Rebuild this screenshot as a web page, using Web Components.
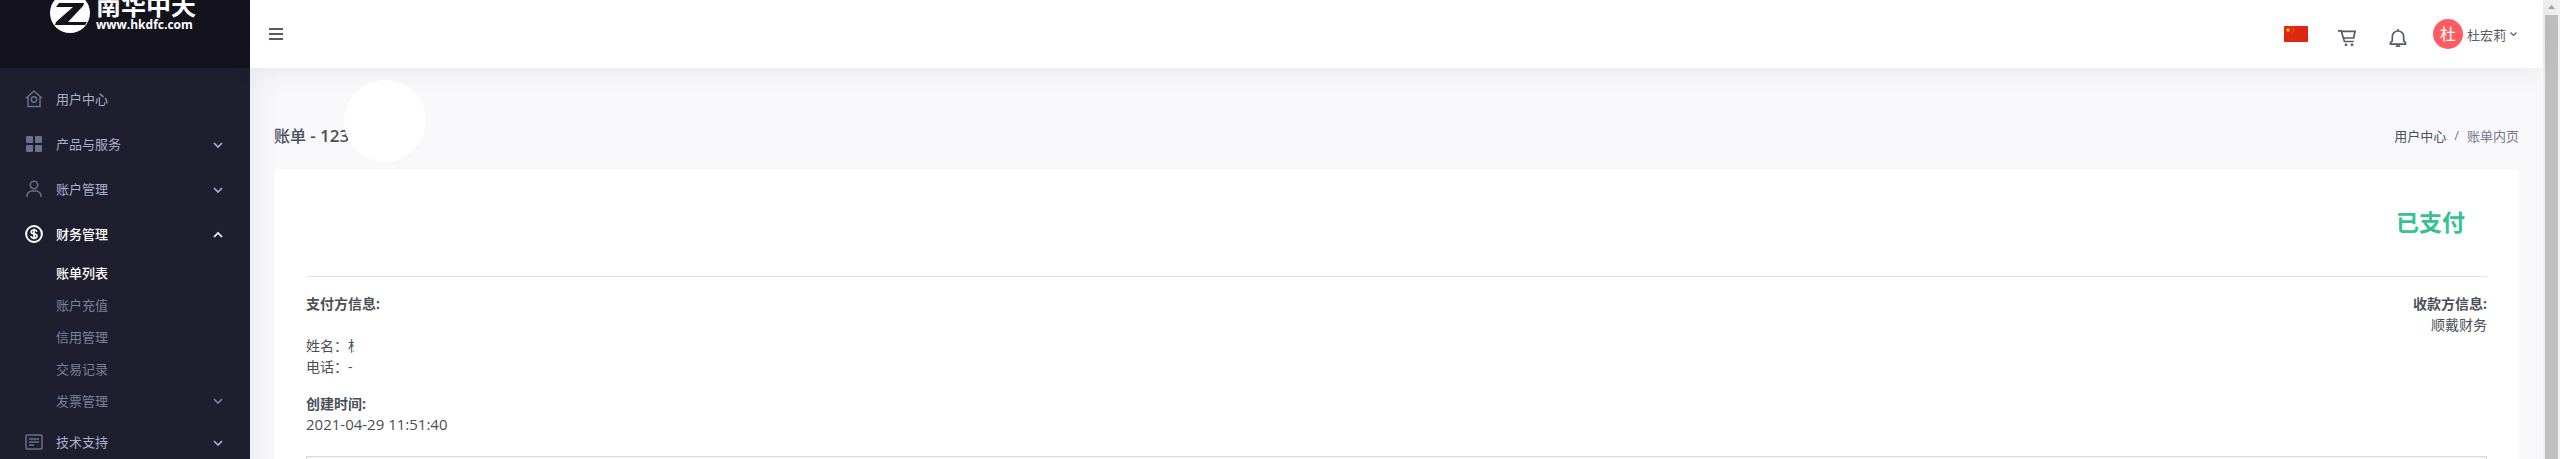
<!DOCTYPE html>
<html lang="zh-CN">
<head>
<meta charset="utf-8">
<title>账单</title>
<style>
body {
    margin: 0;
    height: 100vh;
    overflow: hidden;
    background-color: #f8f8fb;
    color: #495057;
    font-family: "Open Sans", "Noto Sans CJK SC", sans-serif;
    font-size: 13px;
}
</style>
</head>
<body>
<app-shell>
    <side-bar slot="side">
        <brand-logo slot="brand"></brand-logo>
        <nav-item icon="home" label="用户中心"></nav-item>
        <nav-item icon="grid" label="产品与服务" arrow="down"></nav-item>
        <nav-item icon="user" label="账户管理" arrow="down"></nav-item>
        <nav-item icon="money" label="财务管理" arrow="up" active>
            <sub-item label="账单列表" active></sub-item>
            <sub-item label="账户充值"></sub-item>
            <sub-item label="信用管理"></sub-item>
            <sub-item label="交易记录"></sub-item>
            <sub-item label="发票管理" arrow></sub-item>
        </nav-item>
        <nav-item icon="doc" label="技术支持" arrow="down"></nav-item>
    </side-bar>
    <top-bar slot="top" user="杜宏莉" initial="杜"></top-bar>
    <page-title number="123">
        账单
        <a slot="parent" href="#">用户中心</a>
        <span slot="current">账单内页</span>
    </page-title>
    <bill-card>
        <span slot="status">已支付</span>
        <bill-info slot="payer" label="支付方信息:">
            <br>姓名：<name-clip>杜</name-clip><br>电话：-
        </bill-info>
        <bill-info slot="payer" label="创建时间:"><bill-time>2021-04-29 11:51:40</bill-time></bill-info>
        <bill-info slot="payee" label="收款方信息:">顺戴财务</bill-info>
    </bill-card>
    <scroll-track slot="scroll"></scroll-track>
</app-shell>

<script>
const icons = {
    home: '<path d="M1 8.200 9 1l8 7.200M3 7v9.500h12V7"/><circle cx="9" cy="9.500" r="2.700"/>',
    grid: '<g fill="currentColor" stroke="none"><rect x="1" y="1" width="7" height="7" rx="1"/><rect x="10" y="1" width="7" height="7" rx="1"/><rect x="1" y="10" width="7" height="7" rx="1"/><rect x="10" y="10" width="7" height="7" rx="1"/></g>',
    user: '<circle cx="9" cy="5" r="3.700"/><path d="M2 17v-1a5 5 0 0 1 5-5h4a5 5 0 0 1 5 5v1"/>',
    money: '<circle cx="9" cy="9" r="7.900" stroke-width="2"/><path d="M12 6.800C11.600 5.500 10.500 5 9 5 7.300 5 6.200 5.700 6.200 6.900 6.200 9.600 12 8.200 12 11c0 1.300-1.300 2-3 2s-2.800-.6-3.100-1.900M9 3.700v10.600" stroke-width="1.700"/>',
    doc: '<rect x="1" y="2" width="16" height="14" rx="1"/><path d="M4 6h10M4 9h10M4 12h5"/>'
}

function define(name, html, setup) {
    const template = document.createElement('template')
    template.innerHTML = html
    customElements.define(name,
    class extends HTMLElement {
        constructor() {
            super()
            this.attachShadow({ mode: 'open' })
                .appendChild(template.content.cloneNode(true))
            if (setup) setup(this, this.shadowRoot)
        }
    })
}

define('app-shell', `
<style>
:host {
    display: grid;
    grid-template-columns: 250px minmax(0, 1fr) 17px;
    height: 100vh;
    overflow: hidden;
}
.page {
    display: flex;
    flex-direction: column;
    min-width: 0;
}
main {
    flex: 1;
    min-height: 0;
    padding: 0 24px;
}
</style>
<slot name="side"></slot>
<div class="page">
    <slot name="top"></slot>
    <main><slot></slot></main>
</div>
<slot name="scroll"></slot>
`)

define('side-bar', `
<style>
:host {
    display: block;
    overflow: hidden;
    background-color: #1f1e2e;
    box-shadow: 0 0 30px rgba(31, 30, 46, 0.08);
}
.brand {
    display: flex;
    box-sizing: border-box;
    height: 68px;
    padding-left: 50px;
    background-color: #14131d;
}
nav {
    padding-top: 8px;
}
</style>
<div class="brand"><slot name="brand"></slot></div>
<nav><slot></slot></nav>
`)

define('brand-logo', `
<style>
:host {
    display: flex;
    gap: 6px;
    height: 33px;
    align-items: flex-end;
    color: #fff;
}
svg {
    display: block;
}
.name {
    font-size: 25px;
    font-weight: bold;
    line-height: 24px;
}
.site {
    font-size: 12px;
    font-weight: bold;
    line-height: 16px;
}
</style>
<svg width="40" height="40" viewBox="0 0 40 40">
    <circle cx="20" cy="20" r="20" fill="#fff"/>
    <path d="M9 10h25l-1 3L18 29h19l-2 3H5l1-3 17-15H6z" fill="#14131d"/>
</svg>
<div>
    <div class="name">南华中天</div>
    <div class="site">www.hkdfc.com</div>
</div>
`)

define('nav-item', `
<style>
:host {
    display: block;
    color: #a6b0cf;
    --icon: #6a7187;
}
:host([active]) {
    padding-bottom: 3px;
    color: #fff;
    --icon: #fff;
}
:host([active]) .label {
    font-weight: 500;
}
a {
    display: flex;
    align-items: center;
    height: 45px;
    padding: 0 27px 0 25px;
    color: inherit;
    text-decoration: none;
}
.icon {
    width: 18px;
    height: 18px;
    margin-right: 13px;
    color: var(--icon);
}
.label {
    flex: 1;
}
</style>
<a href="#">
    <svg class="icon" viewBox="0 0 18 18" fill="none" stroke="currentColor" stroke-width="1.500"></svg>
    <span class="label"></span>
    <svg class="arrow" width="10" height="10" viewBox="0 0 10 10" fill="none" stroke="currentColor" stroke-width="1.700"><path/></svg>
</a>
<slot></slot>
`, (el, root) => {
    root.querySelector('.icon').innerHTML = icons[el.getAttribute('icon')]
    root.querySelector('.label').textContent = el.getAttribute('label')
    const arrow = el.getAttribute('arrow')
    if (arrow) {
        root.querySelector('.arrow path').setAttribute('d', arrow === 'up' ? 'M1 8l4-4 4 4' : 'M1 4l4 4 4-4')
    }
})

define('sub-item', `
<style>
:host {
    display: block;
    color: #79829c;
}
:host([active]) {
    color: #fff;
    font-weight: 500;
}
a {
    display: flex;
    align-items: center;
    justify-content: space-between;
    height: 32px;
    padding: 0 27px 0 56px;
    color: inherit;
    text-decoration: none;
}
svg {
    display: none;
}
:host([arrow]) svg {
    display: block;
}
</style>
<a href="#">
    <span></span>
    <svg width="10" height="10" viewBox="0 0 10 10" fill="none" stroke="currentColor" stroke-width="1.700"><path d="M1 4l4 4 4-4"/></svg>
</a>
`, (el, root) => {
    root.querySelector('span').textContent = el.getAttribute('label')
})

define('top-bar', `
<style>
:host {
    display: flex;
    position: relative;
    align-items: center;
    justify-content: space-between;
    box-sizing: border-box;
    height: 68px;
    padding: 0 26px 0 19px;
    background-color: #fff;
    color: #555b6d;
    box-shadow: 0 0 30px rgba(31, 30, 46, 0.08);
}
button {
    display: flex;
    align-items: center;
    padding: 0;
    border: none;
    background: none;
    color: inherit;
    font: inherit;
    cursor: pointer;
}
.tools {
    display: flex;
    align-items: center;
}
.flag {
    margin-right: 29px;
}
.cart {
    margin: 8px 32px 0 0;
}
.bell {
    margin: 8px 26px 0 0;
}
.avatar {
    width: 30px;
    height: 30px;
    margin-right: 4px;
    border-radius: 50%;
    background-color: #ff5c62;
    color: #fff;
    font-size: 16px;
    line-height: 30px;
}
.user {
    margin-right: 4px;
}
</style>
<button aria-label="菜单">
    <svg width="14" height="14" viewBox="0 0 14 14" stroke="currentColor" stroke-width="2"><path d="M0 2h14M0 7h14M0 12h14"/></svg>
</button>
<div class="tools">
    <button class="flag" aria-label="中文">
        <svg width="24" height="16" viewBox="0 0 24 16">
            <path fill="#de2910" d="M0 0h24v16H0z"/>
            <path fill="#ffde00" d="M4 1.600l.6 1.700h1.800L5 4.400l.5 1.700L4 5.100 2.500 6.100 3 4.400 1.600 3.300h1.800z"/>
            <g fill="#f08a00"><circle cx="8" cy="1.700" r=".5"/><circle cx="9.500" cy="3.200" r=".5"/><circle cx="9.500" cy="5.300" r=".5"/><circle cx="8" cy="6.900" r=".5"/></g>
        </svg>
    </button>
    <button class="cart" aria-label="购物车">
        <svg width="20" height="18" viewBox="0 0 20 18" fill="none" stroke="currentColor" stroke-width="1.700">
            <path d="M1 1.800h3.200l3.200 10.700h9.300M4.400 2.300h13.700L16.600 9H6.400"/>
            <g fill="currentColor" stroke="none"><circle cx="9" cy="15.800" r="1.400"/><circle cx="15" cy="15.800" r="1.400"/></g>
        </svg>
    </button>
    <button class="bell" aria-label="通知">
        <svg width="18" height="20" viewBox="0 0 18 20" fill="none" stroke="currentColor" stroke-width="1.700">
            <path d="M9 1v2M1.500 16.200v-1.500l1.800-1.900V8.700a5.700 5.700 0 0 1 11.400 0v4.100l1.800 1.900v1.500zM6.800 18.200h4.400"/>
        </svg>
    </button>
    <button>
        <span class="avatar"></span>
        <span class="user"></span>
        <svg width="7" height="7" viewBox="0 0 7 7" fill="none" stroke="currentColor" stroke-width="1.200"><path d="M.5 1.500l3 3 3-3"/></svg>
    </button>
</div>
`, (el, root) => {
    root.querySelector('.avatar').textContent = el.getAttribute('initial')
    root.querySelector('.user').textContent = el.getAttribute('user')
})

define('page-title', `
<style>
:host {
    display: flex;
    position: relative;
    align-items: center;
    justify-content: space-between;
    height: 24px;
    margin: 55px 0 22px;
}
h4 {
    margin: 0;
    font-size: 16px;
    font-weight: 500;
}
b {
    font-size: 17px;
    font-weight: 600;
}
/* round loader lies over the end of the bill number */
.loader {
    position: absolute;
    left: 70px;
    bottom: -15px;
    width: 82px;
    height: 82px;
    border-radius: 50%;
    background-color: #fff;
}
.crumbs {
    display: flex;
    gap: 8px;
    color: #74788d;
}
::slotted(a) {
    color: #495057;
    text-decoration: none;
}
</style>
<h4><slot></slot><b></b></h4>
<div class="loader"></div>
<div class="crumbs"><slot name="parent"></slot><span>/</span><slot name="current"></slot></div>
`, (el, root) => {
    root.querySelector('b').textContent = '- ' + el.getAttribute('number')
})

define('bill-card', `
<style>
:host {
    display: block;
    padding: 32px 32px 40px;
    border-radius: 6px;
    background-color: #fff;
    font-size: 14px;
    line-height: 21px;
}
.status {
    height: 75px;
    padding-right: 22px;
    color: #34c38f;
    font-size: 23px;
    font-weight: bold;
    line-height: 42px;
    text-align: right;
}
.parties {
    display: flex;
    justify-content: space-between;
    padding: 16px 0 21px;
    border-top: 1px solid #e2e3e4;
}
.payee {
    text-align: right;
}
.items {
    height: 40px;
    border: 1px solid #d9dadb;
    background-color: #f6f6f6;
}
</style>
<div class="status"><slot name="status"></slot></div>
<div class="parties">
    <div><slot name="payer"></slot></div>
    <div class="payee"><slot name="payee"></slot></div>
</div>
<div class="items"></div>
`)

define('bill-info', `
<style>
:host {
    display: block;
    margin-bottom: 16px;
}
:host([label="创建时间:"]) {
    margin-bottom: 0;
}
strong {
    display: block;
    font-weight: bold;
}
</style>
<strong></strong>
<slot></slot>
`, (el, root) => {
    root.querySelector('strong').textContent = el.getAttribute('label')
})

define('bill-time', `
<style>
:host {
    display: block;
    font-size: 15px;
}
</style>
<slot></slot>
`)

define('name-clip', `
<style>
:host {
    display: inline-block;
    width: 6px;
    height: 21px;
    overflow: hidden;
    vertical-align: top;
    white-space: nowrap;
}
</style>
<slot></slot>
`)

define('scroll-track', `
<style>
:host {
    display: flex;
    flex-direction: column;
    box-sizing: border-box;
    padding: 0 2px;
    background-color: #f1f1f1;
}
svg {
    display: block;
}
.thumb {
    flex: 1;
    background-color: #c1c1c1;
}
</style>
<svg width="13" height="15" viewBox="0 0 13 15"><path d="M3 9l3.500-4L10 9z" fill="#a3a3a3"/></svg>
<div class="thumb"></div>
`)
</script>
</body>
</html>
